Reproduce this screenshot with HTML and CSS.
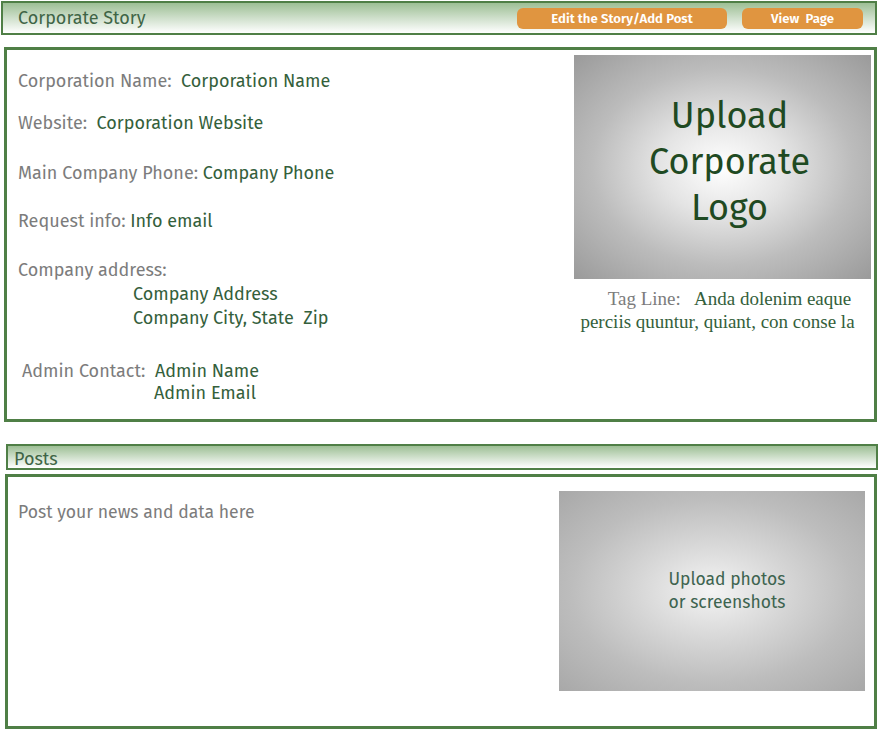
FILE: index.html
```html
<!DOCTYPE html>
<html>
<head>
<meta charset="utf-8">
<link rel="stylesheet" href="styles.css">
</head>
<body>
<div class="topbar">
  <div class="topbar-title">Corporate Story</div>
  <div class="actions">
    <span class="btn btn-edit">Edit the Story/Add Post</span>
    <span class="btn btn-view">View&nbsp; Page</span>
  </div>
</div>

<div class="story">
  <div class="info">
    <div class="row r1"><span class="lbl">Corporation Name:</span>&nbsp; <span class="val">Corporation Name</span></div>
    <div class="row r2"><span class="lbl">Website:</span>&nbsp; <span class="val">Corporation Website</span></div>
    <div class="row r3"><span class="lbl">Main Company Phone:</span> <span class="val">Company Phone</span></div>
    <div class="row r4"><span class="lbl">Request info:</span> <span class="val">Info email</span></div>
    <div class="row r5"><span class="lbl">Company address:</span></div>
    <div class="row addr val">Company Address</div>
    <div class="row addr val">Company City, State&nbsp; Zip</div>
    <div class="row admin"><span class="lbl">Admin Contact:</span>&nbsp; <span class="val">Admin Name</span></div>
    <div class="row admin2 val">Admin Email</div>
  </div>
  <div class="logo-col">
    <div class="logo-box"><span>Upload<br>Corporate<br>Logo</span></div>
    <div class="tagline"><span class="tag-indent"></span><span class="tag-lbl">Tag Line:</span>&nbsp;&nbsp; <span class="tag-val">Anda dolenim eaque<br>perciis quuntur, quiant, con conse la</span></div>
  </div>
</div>

<div class="posts-bar">Posts</div>
<div class="posts">
  <div class="posts-text">Post your news and data here</div>
  <div class="photo-box"><span>Upload photos<br>or screenshots</span></div>
</div>
</body>
</html>
```

FILE: styles.css
```css
* { box-sizing: border-box; }
body {
  margin: 0;
  width: 880px;
  font-family: "Fira Sans", "Open Sans", "Noto Sans", sans-serif;
  background: #fff;
}
.topbar {
  margin: 1px 3px 0 1px;
  height: 34px;
  border: 2px solid #4f7f46;
  background: linear-gradient(to bottom, #9dbf95 0%, #e2ece0 70%, #ffffff 100%);
  display: flex;
  align-items: center;
  justify-content: space-between;
  padding: 0 12px 0 15px;
}
.topbar-title {
  font-size: 18px;
  color: #3f6546;
}
.actions { display: flex; gap: 15px; padding-top: 1px; }
.btn {
  display: flex;
  align-items: center;
  justify-content: center;
  height: 21px;
  border-radius: 6px;
  background: #e09540;
  color: #fff;
  font-weight: 600;
  font-size: 13.2px;
}
.btn-edit { width: 210px; }
.btn-view { width: 121px; }

.story {
  margin: 12px 3px 0 4px;
  height: 375px;
  border: 3px solid #4f7f46;
  display: flex;
  justify-content: space-between;
}
.info {
  padding: 20px 0 0 11px;
  font-size: 18px;
  line-height: 23px;
}
.row { white-space: nowrap; }
.lbl { color: #7c7c7c; }
.val { color: #34603b; }
.r2 { margin-top: 19px; }
.r3 { margin-top: 27px; }
.r4 { margin-top: 25px; }
.r5 { margin-top: 26px; }
.addr { padding-left: 115px; margin-top: 1px; }
.admin { margin-top: 30px; padding-left: 4px; }
.admin2 { padding-left: 136px; margin-top: -1px; }

.logo-col {
  width: 300px;
  padding: 5px 3px 0 0;
}
.logo-box {
  width: 297px;
  height: 224px;
  background: radial-gradient(ellipse at center, #ffffff 0%, #e4e4e4 30%, #bcbcbc 62%, #9a9a9a 100%);
  display: flex;
  align-items: center;
  justify-content: center;
  text-align: center;
}
.logo-box span {
  font-size: 36px;
  line-height: 46px;
  color: #1f4a22;
  margin-left: 14px;
  margin-top: -10px;
}
.tagline {
  margin-top: 8px;
  margin-left: -10px;
  font-family: "Liberation Serif", "DejaVu Serif", serif;
  font-size: 19px;
  line-height: 23px;
  text-align: center;
  white-space: nowrap;
}
.tag-indent { display: inline-block; width: 24px; }
.tag-lbl { color: #7c7c7c; }
.tag-val { color: #34603b; }

.posts-bar {
  margin: 22px 2px 0 6px;
  height: 26px;
  border: 2px solid #4f7f46;
  background: linear-gradient(to bottom, #9dbf95 0%, #e2ece0 70%, #ffffff 100%);
  font-size: 18px;
  line-height: 26px;
  color: #3f6546;
  padding-left: 6px;
}
.posts {
  margin: 4px 3px 0 5px;
  height: 255px;
  border: 3px solid #4f7f46;
  display: flex;
  justify-content: space-between;
  align-items: flex-start;
}
.posts-text {
  padding: 24px 0 0 10px;
  font-size: 17.6px;
  line-height: 23px;
  color: #7c7c7c;
}
.photo-box {
  margin: 14px 9px 0 0;
  width: 306px;
  height: 200px;
  background: radial-gradient(ellipse at center, #f4f4f4 0%, #d6d6d6 35%, #bdbdbd 65%, #a8a8a8 100%);
  display: flex;
  align-items: center;
  justify-content: center;
  text-align: center;
}
.photo-box span {
  font-size: 17.5px;
  line-height: 23px;
  color: #3e6450;
  margin-left: 30px;
}
```
